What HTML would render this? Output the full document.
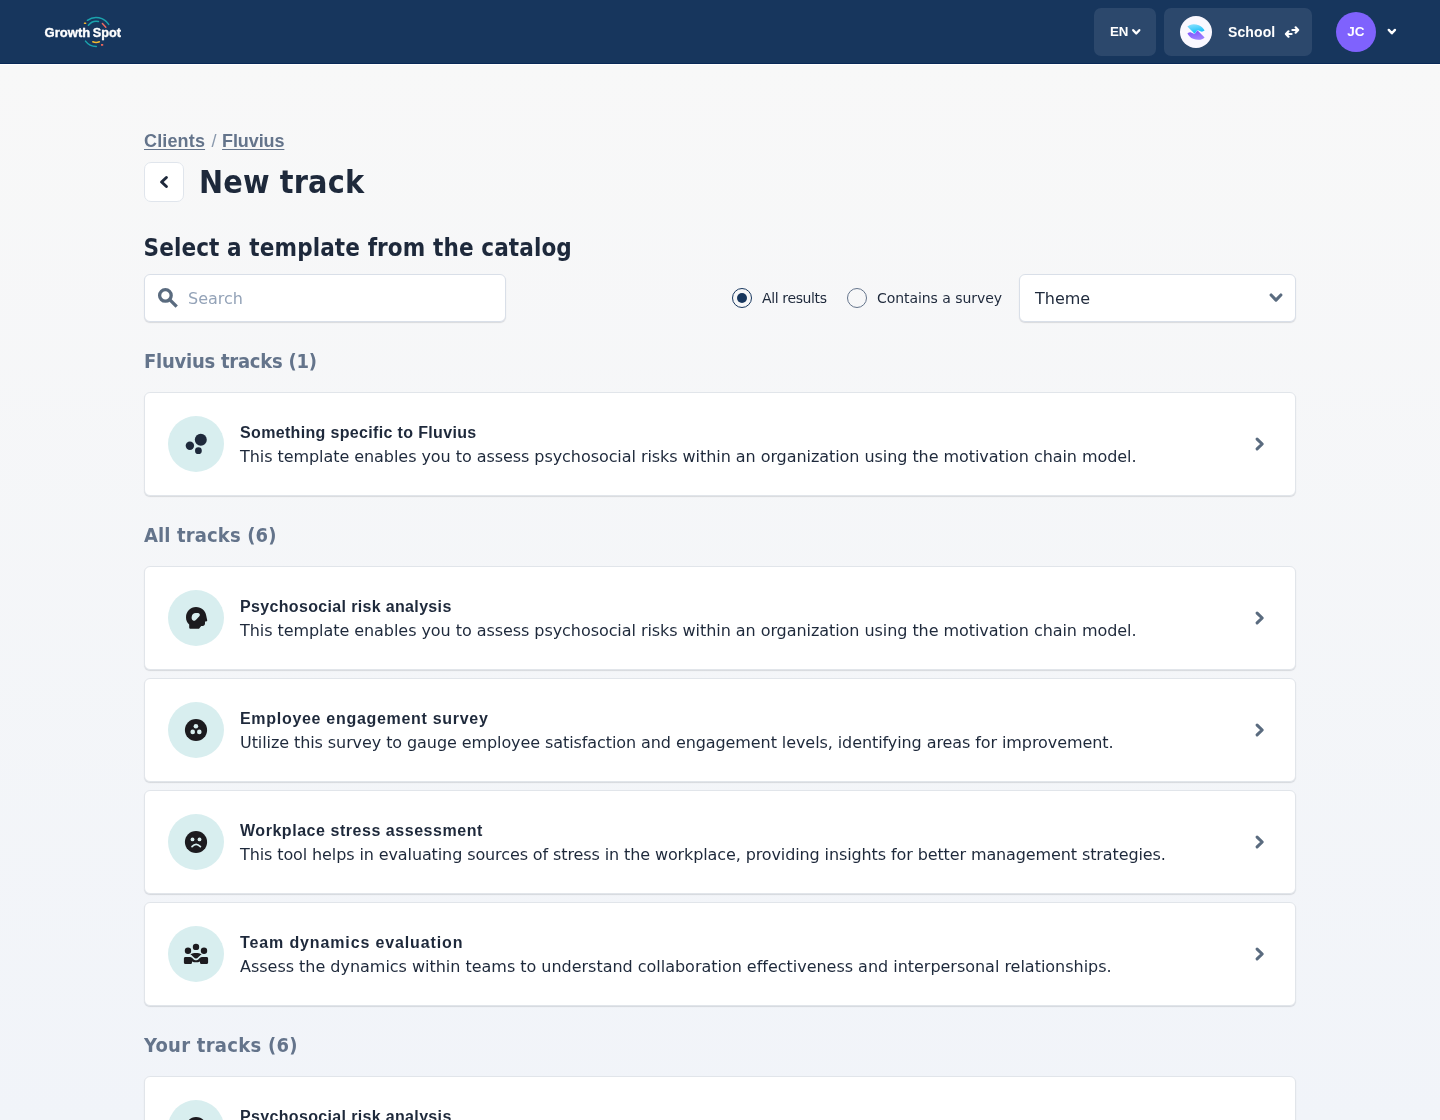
<!DOCTYPE html>
<html lang="en">
<head>
<meta charset="utf-8">
<title>New track</title>
<style>
*{box-sizing:border-box;margin:0;padding:0}
html,body{width:1440px;height:1120px;overflow:hidden}
body{font-family:"DejaVu Sans","Liberation Sans",sans-serif;color:#1e293b;background:linear-gradient(180deg,#f8f8f8 0px,#f8f8f8 64px,#f1f4f9 1120px);position:relative}
.b{font-family:"Liberation Sans",sans-serif;font-weight:700}
.h{font-family:"DejaVu Sans Condensed","DejaVu Sans",sans-serif;font-stretch:condensed;font-weight:700}
header{position:absolute;left:0;top:0;width:1440px;height:64px;background:#17365d;box-shadow:inset 0 -1px 0 #092957,0 1px 0 #fff}
.hbtn{position:absolute;top:8px;height:48px;border-radius:7px;background:#2c486c}
.abs{position:absolute;white-space:nowrap}
.card{position:absolute;left:144px;width:1152px;height:104px;background:#fff;border:1px solid #e1e5ea;border-radius:6px;box-shadow:0 1px 1px rgba(15,23,42,.13)}
.ic{position:absolute;left:23px;top:23px;width:56px;height:56px;border-radius:50%;background:#d8eeef}
.ic svg{position:absolute;left:0;top:0;width:56px;height:56px}
.ct{position:absolute;left:95px;top:28px;font-size:16px;line-height:24px;white-space:nowrap;letter-spacing:.34px}
.cd{position:absolute;left:95px;top:52px;font-size:16px;line-height:24px;white-space:nowrap;letter-spacing:-.06px}
.chev{position:absolute;left:1103px;top:39px;width:24px;height:24px}
.sec{position:absolute;left:144px;font-size:20px;line-height:28px;color:#64748b;white-space:nowrap;letter-spacing:-.25px}
body{will-change:transform}</style>
</head>
<body>
<header>
  <svg class="abs" style="left:40px;top:12px" width="90" height="40" viewBox="40 12 90 40">
    <g fill="none" stroke-linecap="round" stroke-width="1.5">
      <path d="M87.4 20.3 A14.86 14.86 0 0 1 108.7 24.4" stroke="#1ba3ad"/>
      <path d="M88.4 25.3 A10 10 0 0 1 98.5 21.4" stroke="#1ba3ad"/>
      <path d="M85.5 41.1 A13.3 13.3 0 0 0 96.3 46.4" stroke="#1ba3ad"/>
      <path d="M102.4 23.5 L105.8 27.3" stroke="#ee6a5f"/>
      <path d="M92.8 41.7 Q96.1 43.2 99.4 41.7" stroke="#f6b92d" stroke-width="1.5"/>
      <path d="M84.5 23.3 L85.6 23.3" stroke="#f6b92d"/>
      <path d="M101.9 44.9 L102.3 44.9" stroke="#e8645c" stroke-width="1.8" stroke-linecap="square"/>
    </g>
    <text y="37" font-family="Liberation Sans, sans-serif" font-weight="700" font-size="12.6" fill="#fff" stroke="#fff" stroke-width=".35"><tspan x="44.6" textLength="45.6" lengthAdjust="spacingAndGlyphs">Growth</tspan><tspan x="92.8" textLength="28.2" lengthAdjust="spacingAndGlyphs">Spot</tspan></text>
  </svg>

  <div class="hbtn" style="left:1094px;width:62px"></div>
  <div class="abs b" style="left:1110px;top:22px;font-size:13.3px;line-height:20px;color:#fff;letter-spacing:-.2px">EN</div>
  <svg class="abs" style="left:1128px;top:24px" width="16" height="16" viewBox="1128 24 16 16"><path d="M1133.2 30.2 L1136.25 33.5 L1139.3 30.2" fill="none" stroke="#fff" stroke-width="2.3" stroke-linecap="round" stroke-linejoin="round"/></svg>

  <div class="hbtn" style="left:1164px;width:148px"></div>
  <svg class="abs" style="left:1180px;top:16px" width="32" height="32" viewBox="0 0 32 32">
    <defs>
      <linearGradient id="g1" x1="0" y1="0" x2="0.3" y2="1"><stop offset="0" stop-color="#93e3ff"/><stop offset="1" stop-color="#10bdf8"/></linearGradient>
      <linearGradient id="g2" x1="0" y1="0" x2="0.3" y2="1"><stop offset="0" stop-color="#7a4cff"/><stop offset="1" stop-color="#9d80ff"/></linearGradient>
    </defs>
    <circle cx="16" cy="16" r="16" fill="#faf8ff"/>
    <path d="M24.6 21.5 C22.5 23.8 18 24.8 13.1 22.8 C10.5 21.7 8.5 19.6 7.4 17.4 C8.6 16.4 10 16.2 11 16.4 L14.6 18.1 L17.4 14.2 Z" fill="url(#g2)"/>
    <path d="M7.4 10.5 C9.5 8.2 14 7.2 18.9 9.2 C21.5 10.3 23.5 12.4 24.6 14.6 C23.4 15.6 22 15.8 21 15.6 L17.4 13.9 L14.6 17.8 Z" fill="url(#g1)"/>
  </svg>
  <div class="abs b" style="left:1228px;top:22px;font-size:14px;line-height:20px;color:#fff;letter-spacing:.1px">School</div>
  <svg class="abs" style="left:1280px;top:22px" width="24" height="20" viewBox="1280 22 24 20"><g fill="none" stroke="#fff" stroke-width="2.2" stroke-linecap="round" stroke-linejoin="round"><path d="M1292.4 30 H1297.8 M1295.6 27.3 L1298.2 30 L1295.6 32.7"/><path d="M1291.6 34 H1286.2 M1288.5 31.3 L1285.9 34 L1288.5 36.7"/></g></svg>

  <div class="abs" style="left:1336px;top:12px;width:40px;height:40px;border-radius:50%;background:#7f62fd"></div>
  <div class="abs" style="left:1336px;top:22px;width:40px;text-align:center;font-family:'Liberation Sans',sans-serif;font-weight:700;font-size:13.5px;line-height:20px;color:#fff;letter-spacing:.2px">JC</div>
  <svg class="abs" style="left:1384px;top:24px" width="16" height="16" viewBox="1384 24 16 16"><path d="M1388.75 29.9 L1391.85 33.3 L1394.95 29.9" fill="none" stroke="#fff" stroke-width="2.4" stroke-linecap="round" stroke-linejoin="round"/></svg>
</header>

<!-- breadcrumb -->
<div class="abs b" style="left:144px;top:127px;font-size:18px;line-height:28px;color:#64748b"><span style="text-decoration:underline;text-decoration-thickness:1.4px;text-underline-offset:1.5px;letter-spacing:.15px">Clients</span><span style="font-weight:400;color:#8a99ad;padding:0 5.5px 0 6.5px">/</span><span style="text-decoration:underline;text-decoration-thickness:1.4px;text-underline-offset:1.5px;letter-spacing:-.1px">Fluvius</span></div>

<!-- back + title -->
<div class="abs" style="left:144px;top:162px;width:40px;height:40px;border-radius:7px;background:#fff;border:1px solid #e0e5ec"></div>
<svg class="abs" style="left:152px;top:170px" width="24" height="24" viewBox="152 170 24 24"><path d="M166.4 177.5 L161.6 182 L166.4 186.5" fill="none" stroke="#1e293b" stroke-width="3" stroke-linecap="round" stroke-linejoin="round"/></svg>
<h1 class="abs h" style="left:199px;top:162px;font-size:32px;line-height:40px;color:#1e293b;letter-spacing:.15px">New track</h1>

<h2 class="abs h" style="left:143.5px;top:232px;font-size:24px;line-height:32px;color:#1e293b;letter-spacing:.1px">Select a template from the catalog</h2>

<!-- search -->
<div class="abs" style="left:144px;top:274px;width:362px;height:48px;border-radius:6px;background:#fff;border:1px solid #d9dfe8;box-shadow:0 1px 1px rgba(15,23,42,.13)"></div>
<svg class="abs" style="left:152px;top:282px" width="32" height="32" viewBox="152 282 32 32"><circle cx="165.4" cy="295.4" r="5.8" fill="none" stroke="#5a6b7f" stroke-width="3.3"/><path d="M169.2 299.2 L176.7 306.7" stroke="#5a6b7f" stroke-width="3.3"/></svg>
<div class="abs" style="left:188px;top:287px;font-size:16px;line-height:24px;color:#94a3b8">Search</div>

<!-- radios -->
<div class="abs" style="left:732px;top:288px;width:20px;height:20px;border-radius:50%;border:1.7px solid #17365d"></div>
<div class="abs" style="left:737px;top:293px;width:10px;height:10px;border-radius:50%;background:#17365d"></div>
<div class="abs" style="left:762px;top:288px;font-size:14px;line-height:20px;color:#1e293b;letter-spacing:-.37px">All results</div>
<div class="abs" style="left:847px;top:288px;width:20px;height:20px;border-radius:50%;border:1.7px solid #64748b"></div>
<div class="abs" style="left:877px;top:288px;font-size:14px;line-height:20px;color:#1e293b;letter-spacing:-.06px">Contains a survey</div>

<!-- select -->
<div class="abs" style="left:1019px;top:274px;width:277px;height:48px;border-radius:6px;background:#fff;border:1px solid #d9dfe8;box-shadow:0 1px 1px rgba(15,23,42,.13)"></div>
<div class="abs" style="left:1035px;top:287px;font-size:16px;line-height:24px;color:#1e293b">Theme</div>
<svg class="abs" style="left:1264px;top:286px" width="24" height="24" viewBox="1264 286 24 24"><path d="M1271.1 295 L1276 300.1 L1280.9 295" fill="none" stroke="#5a6b7f" stroke-width="3.1" stroke-linecap="round" stroke-linejoin="round"/></svg>

<!-- sections -->
<div class="sec h" style="top:347px">Fluvius tracks (1)</div>

<div class="card" style="top:392px">
  <div class="ic"><svg viewBox="0 0 56 56"><g fill="#1e293b"><circle cx="32.8" cy="23.8" r="6"/><circle cx="21.9" cy="29.8" r="4.2"/><circle cx="30.4" cy="34.7" r="3.4"/></g></svg></div>
  <div class="ct b">Something specific to Fluvius</div>
  <div class="cd">This template enables you to assess psychosocial risks within an organization using the motivation chain model.</div>
  <svg class="chev" viewBox="0 0 24 24"><path d="M9.1 7.1 L14.2 12 L9.1 16.9" fill="none" stroke="#5a6b7f" stroke-width="3.1" stroke-linecap="round" stroke-linejoin="round"/></svg>
</div>

<div class="sec h" style="top:521px;letter-spacing:.13px">All tracks (6)</div>

<div class="card" style="top:566px">
  <div class="ic"><svg viewBox="0 0 56 56"><path fill="#1c1b1f" fill-rule="evenodd" d="M28 17 C33.5 17 37.6 20.6 38.2 25.6 L39.2 30.2 C39.3 30.9 38.9 31.4 38.2 31.4 L37 31.4 L37 33.6 C37 35 36 36 34.6 36 L33.2 36 L31 38.8 L22.6 38.8 C21.8 38.8 21.2 38.2 21.2 37.4 L21.2 34.6 C19 32.6 18 30.2 18 27.2 C18 21.4 22.4 17 28 17 Z M28.2 23 C25.8 22.8 24 24.1 23.8 26.2 C23.4 28 23.6 30.1 25.5 30.8 C26.6 31.1 27.4 30.3 28.3 29.4 L31.1 26.5 C32 25.4 32.2 24.1 31.1 23.4 C30.2 22.8 29.2 23 28.2 23 Z"/></svg></div>
  <div class="ct b">Psychosocial risk analysis</div>
  <div class="cd">This template enables you to assess psychosocial risks within an organization using the motivation chain model.</div>
  <svg class="chev" viewBox="0 0 24 24"><path d="M9.1 7.1 L14.2 12 L9.1 16.9" fill="none" stroke="#5a6b7f" stroke-width="3.1" stroke-linecap="round" stroke-linejoin="round"/></svg>
</div>

<div class="card" style="top:678px">
  <div class="ic"><svg viewBox="0 0 56 56"><circle cx="28" cy="28" r="11.1" fill="#1c1b1f"/><g fill="#d8eeef"><circle cx="27.9" cy="24.3" r="2.3"/><circle cx="24.7" cy="29.9" r="2.3"/><circle cx="31.3" cy="29.9" r="2.3"/></g></svg></div>
  <div class="ct b" style="letter-spacing:.7px">Employee engagement survey</div>
  <div class="cd" style="letter-spacing:-.085px">Utilize this survey to gauge employee satisfaction and engagement levels, identifying areas for improvement.</div>
  <svg class="chev" viewBox="0 0 24 24"><path d="M9.1 7.1 L14.2 12 L9.1 16.9" fill="none" stroke="#5a6b7f" stroke-width="3.1" stroke-linecap="round" stroke-linejoin="round"/></svg>
</div>

<div class="card" style="top:790px">
  <div class="ic"><svg viewBox="0 0 56 56"><circle cx="28" cy="28" r="11.1" fill="#1c1b1f"/><g fill="#d8eeef"><circle cx="24.5" cy="25.4" r="1.9"/><circle cx="31.5" cy="25.4" r="1.9"/></g><path d="M24 32.6 Q28 28 32.4 32.6" fill="none" stroke="#d8eeef" stroke-width="1.7" stroke-linecap="round"/></svg></div>
  <div class="ct b" style="letter-spacing:.54px">Workplace stress assessment</div>
  <div class="cd" style="letter-spacing:-.11px">This tool helps in evaluating sources of stress in the workplace, providing insights for better management strategies.</div>
  <svg class="chev" viewBox="0 0 24 24"><path d="M9.1 7.1 L14.2 12 L9.1 16.9" fill="none" stroke="#5a6b7f" stroke-width="3.1" stroke-linecap="round" stroke-linejoin="round"/></svg>
</div>

<div class="card" style="top:902px">
  <div class="ic"><svg viewBox="0 0 56 56"><g fill="#1c1b1f"><circle cx="28" cy="20.9" r="3.2"/><circle cx="20" cy="24.7" r="3.2"/><circle cx="36" cy="24.7" r="3.2"/><path d="M22.3 28.4 C25.6 26.6 30.4 26.6 33.7 28.4 C32 29 31 30.4 30 31.6 C29 32.8 27 32.8 26 31.6 C25 30.4 24 29 22.3 28.4 Z"/><path d="M17.4 31 L22 31 C23.6 31 24.4 32 25.2 33 C26.6 34.8 29.4 34.8 30.8 33 C31.6 32 32.4 31 34 31 L38.6 31 C39.5 31 40.1 31.6 40.1 32.5 L40.1 36.6 C40.1 37.5 39.5 38.1 38.6 38.1 L33.4 38.1 C32.5 38.1 32 37.5 32 36.6 L32 35.4 C29.6 36.6 26.4 36.6 24 35.4 L24 36.6 C24 37.5 23.5 38.1 22.6 38.1 L17.4 38.1 C16.5 38.1 15.9 37.5 15.9 36.6 L15.9 32.5 C15.9 31.6 16.5 31 17.4 31 Z"/></g></svg></div>
  <div class="ct b" style="letter-spacing:.87px">Team dynamics evaluation</div>
  <div class="cd" style="letter-spacing:-.02px">Assess the dynamics within teams to understand collaboration effectiveness and interpersonal relationships.</div>
  <svg class="chev" viewBox="0 0 24 24"><path d="M9.1 7.1 L14.2 12 L9.1 16.9" fill="none" stroke="#5a6b7f" stroke-width="3.1" stroke-linecap="round" stroke-linejoin="round"/></svg>
</div>

<div class="sec h" style="top:1031px;letter-spacing:.27px">Your tracks (6)</div>

<div class="card" style="top:1076px">
  <div class="ic"><svg viewBox="0 0 56 56"><path fill="#1c1b1f" fill-rule="evenodd" d="M28 17 C33.5 17 37.6 20.6 38.2 25.6 L39.2 30.2 C39.3 30.9 38.9 31.4 38.2 31.4 L37 31.4 L37 33.6 C37 35 36 36 34.6 36 L33.2 36 L31 38.8 L22.6 38.8 C21.8 38.8 21.2 38.2 21.2 37.4 L21.2 34.6 C19 32.6 18 30.2 18 27.2 C18 21.4 22.4 17 28 17 Z M28.2 23 C25.8 22.8 24 24.1 23.8 26.2 C23.4 28 23.6 30.1 25.5 30.8 C26.6 31.1 27.4 30.3 28.3 29.4 L31.1 26.5 C32 25.4 32.2 24.1 31.1 23.4 C30.2 22.8 29.2 23 28.2 23 Z"/></svg></div>
  <div class="ct b">Psychosocial risk analysis</div>
  <div class="cd">This template enables you to assess psychosocial risks within an organization using the motivation chain model.</div>
  <svg class="chev" viewBox="0 0 24 24"><path d="M9.1 7.1 L14.2 12 L9.1 16.9" fill="none" stroke="#5a6b7f" stroke-width="3.1" stroke-linecap="round" stroke-linejoin="round"/></svg>
</div>
</body>
</html>
